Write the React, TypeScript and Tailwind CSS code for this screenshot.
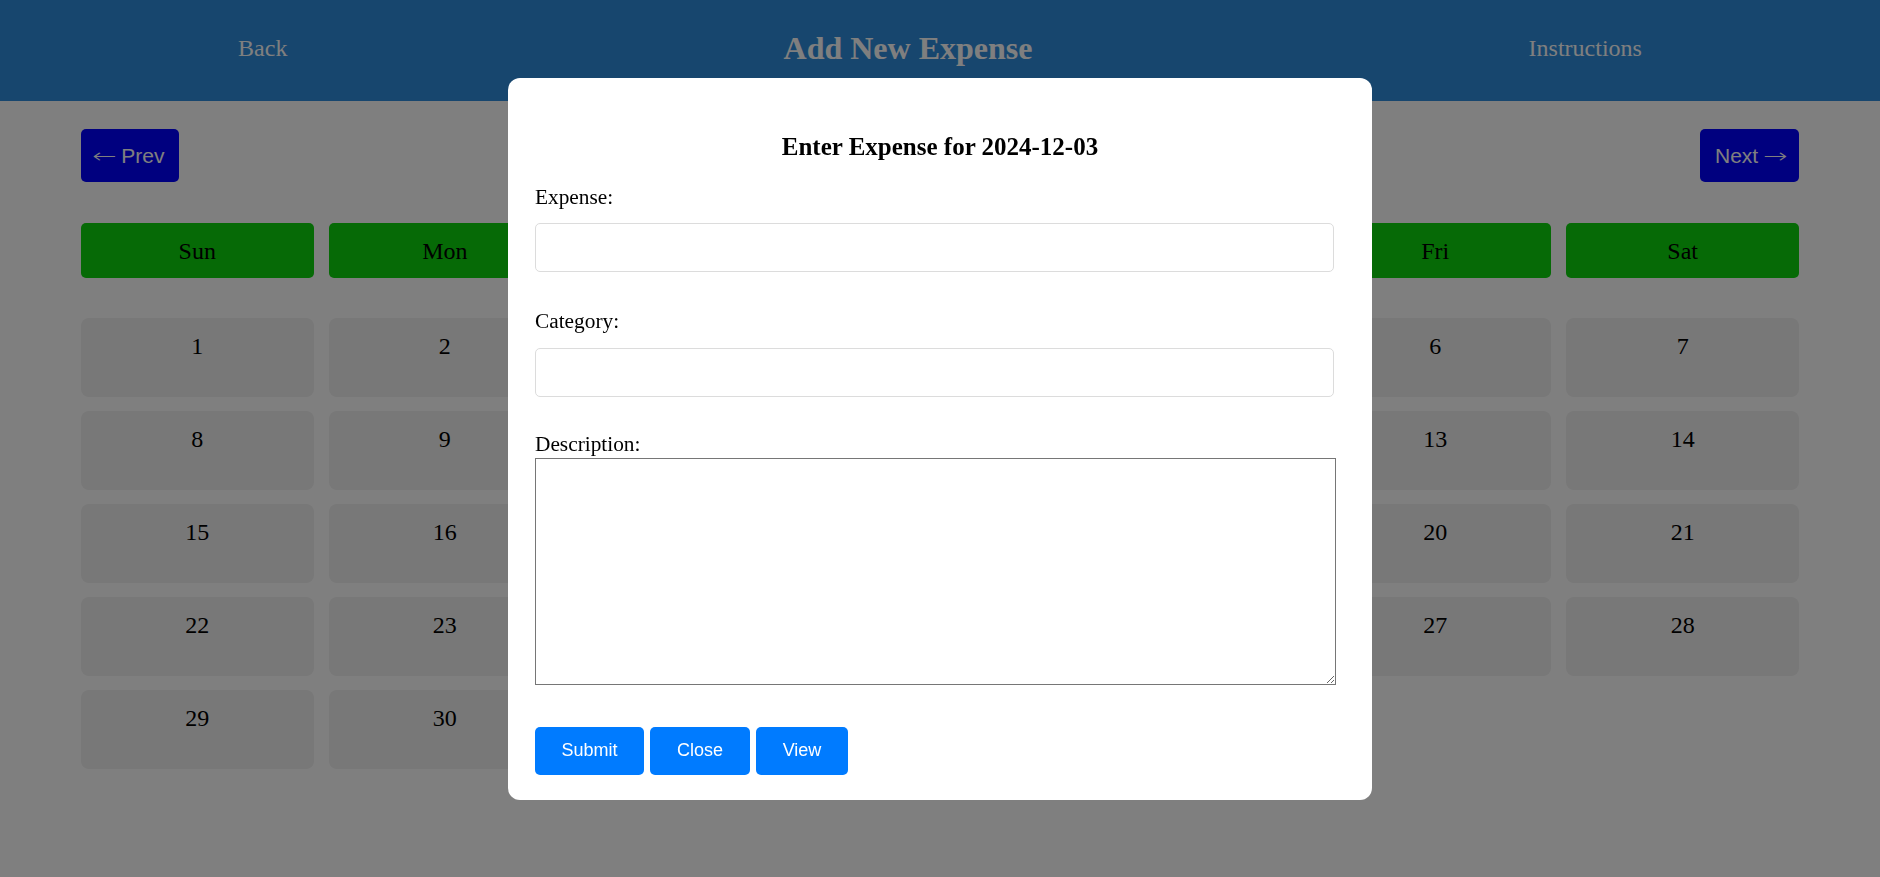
import React from 'react';

const days = ['Sun', 'Mon', 'Tue', 'Wed', 'Thu', 'Fri', 'Sat'];
const dates = Array.from({ length: 31 }, (_, i) => i + 1);

const serif = { fontFamily: '"Liberation Serif", "Times New Roman", serif' };
const sans = { fontFamily: '"Liberation Sans", Arial, sans-serif' };
const arrowFont = { fontFamily: '"DejaVu Sans", sans-serif' };

const App: React.FC = () => {
  return (
    <div className="min-h-[877px] bg-white text-black" style={serif}>
      <header className="h-[101px] pb-[5px] bg-[#2e8cdc] flex items-center justify-around text-white">
        <span className="mr-[20px] text-[24px] leading-[28px]">Back</span>
        <h1 className="text-[32px] leading-[37px] font-bold">Add New Expense</h1>
        <span className="ml-[20px] text-[24px] leading-[28px]">Instructions</span>
      </header>

      <div className="px-[81px]">
        <div className="mt-[28px] flex justify-between">
          <button
            className="w-[98px] h-[53px] rounded-[5px] bg-[#0000ff] text-white text-[21px] flex items-center justify-center gap-[9px]"
            style={sans}
          >
            <span className="inline-block text-[20px] font-extralight scale-x-[1.45]" style={arrowFont}>←</span>
            <span>Prev</span>
          </button>
          <button
            className="w-[99px] h-[53px] rounded-[5px] bg-[#0000ff] text-white text-[21px] flex items-center justify-center gap-[9px]"
            style={sans}
          >
            <span>Next</span>
            <span className="inline-block text-[20px] font-extralight scale-x-[1.45]" style={arrowFont}>→</span>
          </button>
        </div>

        <div className="mt-[41px] grid grid-cols-7 gap-x-[15px]">
          {days.map((d) => (
            <div
              key={d}
              className="h-[55px] rounded-[5px] bg-[#0cd40c] flex items-center justify-center text-[24px]"
            >
              {d}
            </div>
          ))}
        </div>

        <div className="mt-[40px] grid grid-cols-7 gap-x-[15px] gap-y-[14px]">
          {dates.map((n) => (
            <div key={n} className="h-[79px] rounded-[8px] bg-[#f0f0f0] pt-[15px] text-center text-[24px] leading-[27px]">
              {n}
            </div>
          ))}
        </div>
      </div>

      {/* modal */}
      <div className="fixed inset-0 bg-black/50 flex items-center justify-center">
        <div className="w-[864px] bg-white rounded-[12px] pl-[27px] pt-[54px] pb-[25px] text-[21.33px]">
          <h3 className="-ml-[27px] w-[864px] text-center font-bold text-[25px] leading-[29px]">
            Enter Expense for 2024-12-03
          </h3>

          <label className="block mt-[24px] leading-[24px]">Expense:</label>
          <input className="block mt-[14px] w-[799px] h-[49px] border border-[#dcdcdc] rounded-[5px] bg-white" />

          <label className="block mt-[37px] leading-[24px]">Category:</label>
          <input className="block mt-[15px] w-[799px] h-[49px] border border-[#dcdcdc] rounded-[5px] bg-white" />

          <label className="block mt-[35px] leading-[24px]">Description:</label>
          <textarea className="block mt-[2px] w-[801px] h-[227px] border border-[#767676] bg-white" />

          <div className="mt-[42px] flex gap-[6px] text-[18px] text-white" style={sans}>
            <button className="w-[109px] h-[48px] rounded-[5px] bg-[#007bff]">Submit</button>
            <button className="w-[100px] h-[48px] rounded-[5px] bg-[#007bff]">Close</button>
            <button className="w-[92px] h-[48px] rounded-[5px] bg-[#007bff]">View</button>
          </div>
        </div>
      </div>
    </div>
  );
};

export default App;
